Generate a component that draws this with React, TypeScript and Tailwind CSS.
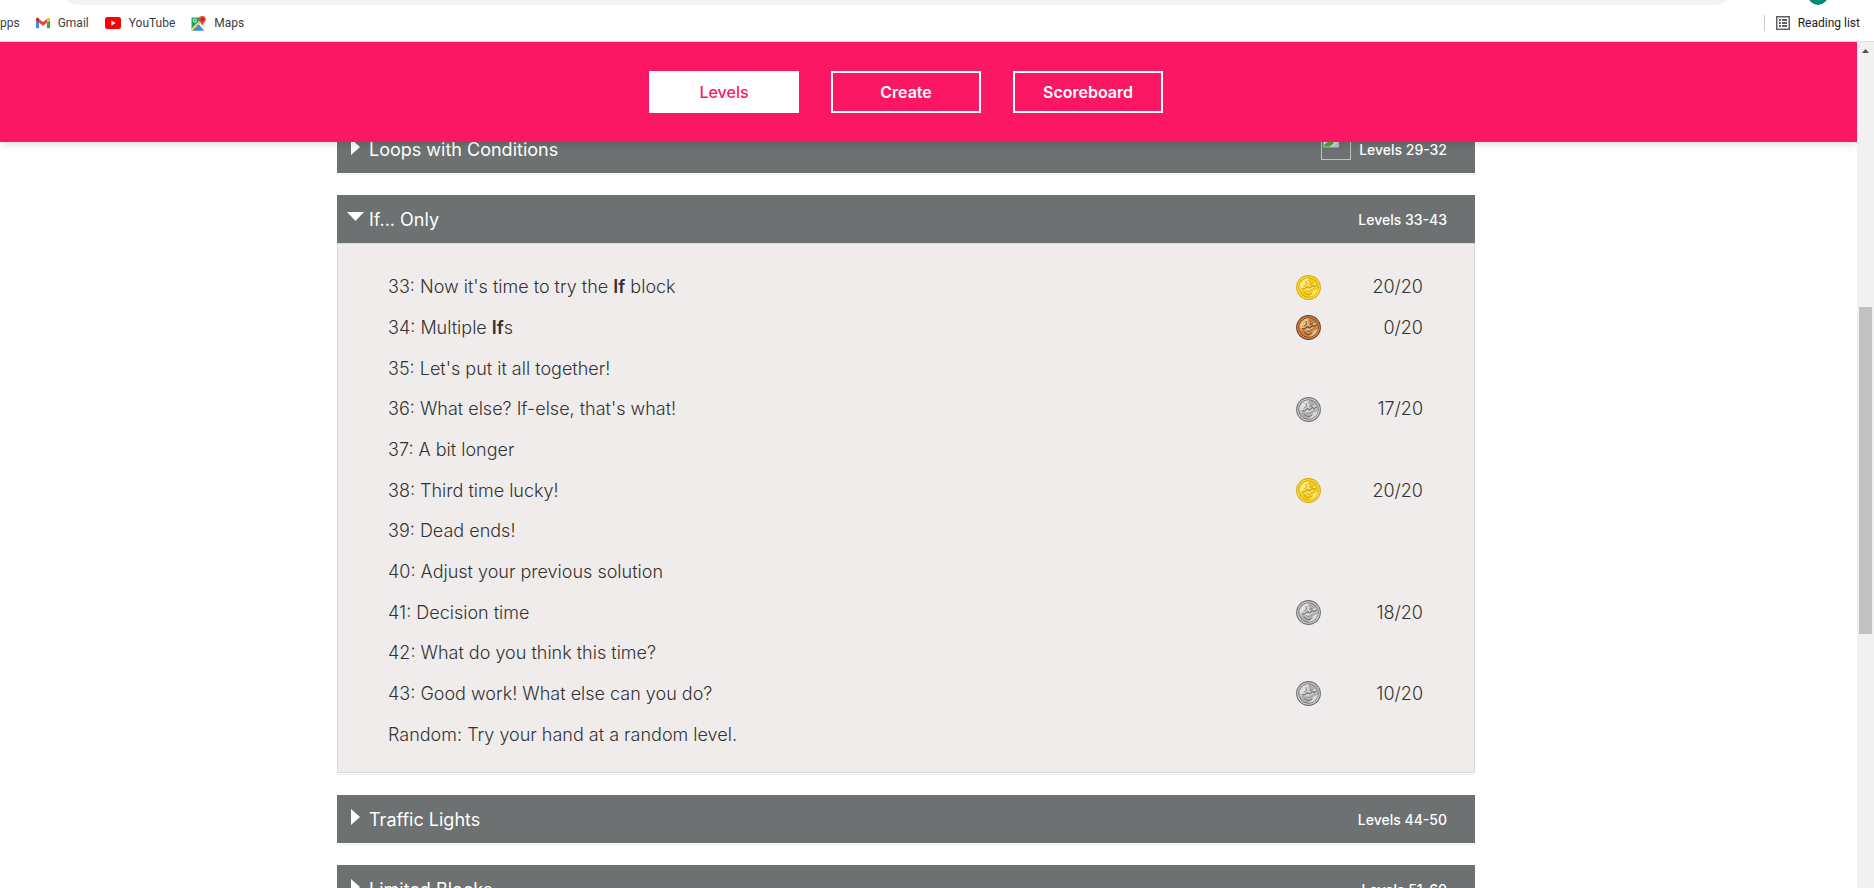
import type { ReactNode } from "react";

type Medal = "gold" | "silver" | "bronze";

const metals: Record<Medal, { rim: string; ring: string; face: string; light: string; mark: string }> = {
  gold: { rim: "#dba800", ring: "#ffe64a", face: "#f2ca14", light: "#fff6a8", mark: "#cf9f0c" },
  silver: { rim: "#6f6f72", ring: "#d2d2d4", face: "#adadb0", light: "#f2f2f3", mark: "#737377" },
  bronze: { rim: "#7a3a1a", ring: "#cf9054", face: "#c08244", light: "#fbd9a6", mark: "#7b4017" },
};

function Coin({ medal }: { medal: Medal }) {
  const c = metals[medal];
  return (
    <svg viewBox="0 0 25 25" className="size-[25px]" role="img" aria-label={medal}>
      <circle cx="12.5" cy="12.5" r="12.4" fill={c.rim} />
      <circle cx="12.5" cy="12.5" r="11.3" fill={c.ring} />
      <circle cx="12.5" cy="12.5" r="10.2" fill={c.mark} />
      <circle cx="12.5" cy="12.5" r="9.5" fill={c.face} />
      <path d="M3.500 11C4.500 6 8.500 3.400 13 3.200L11 8L5 16Z" fill={c.light} opacity=".7" />
      <path d="M13 21.800C18 21.500 21.500 18 21.800 13.500L17 16Z" fill={c.light} opacity=".65" />
      <path d="M10.500 4.500L13.500 7.500L13 10.500L16 10L18 8L22 9L21 12L17.500 12.500L15.500 16L12 18L9 16L7 12.500L9 10.500Z" fill={c.light} opacity=".55" />
      <path d="M5.500 13.500L8.500 14L11.500 11.500L13.500 13L16.500 10.500L18 11.500L21.500 9.500" fill="none" stroke={c.mark} strokeWidth="1.1" />
      <path d="M7.500 11.500L10.500 9.500L10 6M10 15.500Q13 18 16.500 14M14 9.500L16.500 8.500M8 17Q12 21.500 16.500 18" fill="none" stroke={c.mark} strokeWidth=".9" />
    </svg>
  );
}

function Triangle({ open }: { open: boolean }) {
  return open ? (
    <svg viewBox="0 0 17 16" className="h-4 w-[17px]" fill="#fff" aria-hidden="true"><path d="M0 3H17L8.500 12Z" /></svg>
  ) : (
    <svg viewBox="0 0 17 16" className="h-4 w-[17px]" fill="#fff" aria-hidden="true"><path d="M4 0V16L13 8Z" /></svg>
  );
}

function BrokenImage() {
  return (
    <svg viewBox="0 0 30 30" className="size-[30px]" role="img" aria-label="Medal unavailable">
      <rect x=".5" y=".5" width="29" height="29" fill="none" stroke="#c0c0c0" />
      <path d="M2.500 2.500H13L17.500 7V17H2.500Z" fill="#c6d9f7" stroke="#b5b5b5" />
      <path d="M3 16.500V15L9 10L13 13L9 16.500Z" fill="#4ba836" />
      <path d="M11 17L18 11V17Z" fill="#b8c4c0" />
    </svg>
  );
}

function Section({ title, range, open = false, extra, children }: { title: string; range: string; open?: boolean; extra?: ReactNode; children?: ReactNode }) {
  return (
    <section className="shrink-0 shadow-[0_1px_0_#fff,0_2px_0_#f0f0f0]">
      <button type="button" aria-expanded={open} className="flex h-12 w-full items-center bg-[#6d7171] pr-7 pl-[10px] text-left text-white">
        <span className="pb-1"><Triangle open={open} /></span>
        <span className="ml-[5px] flex-1 pt-[2px] text-lg">{title}</span>
        {extra && <span className="pb-[9px]">{extra}</span>}
        <span className="ml-2 pt-px text-sm font-medium">{range}</span>
      </button>
      {children}
    </section>
  );
}

const levels: { id: string; text: ReactNode; medal?: Medal; score?: string }[] = [
  { id: "33", text: <>Now it's time to try the <b className="font-semibold">If</b> block</>, medal: "gold", score: "20/20" },
  { id: "34", text: <>Multiple <b className="font-semibold">If</b>s</>, medal: "bronze", score: "0/20" },
  { id: "35", text: "Let's put it all together!" },
  { id: "36", text: "What else? If-else, that's what!", medal: "silver", score: "17/20" },
  { id: "37", text: "A bit longer" },
  { id: "38", text: "Third time lucky!", medal: "gold", score: "20/20" },
  { id: "39", text: "Dead ends!" },
  { id: "40", text: "Adjust your previous solution" },
  { id: "41", text: "Decision time", medal: "silver", score: "18/20" },
  { id: "42", text: "What do you think this time?" },
  { id: "43", text: "Good work! What else can you do?", medal: "silver", score: "10/20" },
  { id: "Random", text: "Try your hand at a random level." },
];

function GmailIcon() {
  return (
    <svg viewBox="0 0 16 12" className="h-3 w-[14px]" aria-hidden="true">
      <path d="M1 12H3.500V5.500L0 3V11Q0 12 1 12Z" fill="#4285f4" />
      <path d="M12.500 12H15Q16 12 16 11V3L12.500 5.500Z" fill="#34a853" />
      <path d="M12.500 1.500V5.700L16 3V1.700C16 .1 14.200-.5 13.200.4Z" fill="#fbbc04" />
      <path d="M3.500 5.700V1.500L8 4.800L12.500 1.500V5.700L8 9Z" fill="#ea4335" />
      <path d="M0 1.700V3L3.500 5.700V1.500L2.800.4C1.800-.5 0 .1 0 1.700Z" fill="#c5221f" />
    </svg>
  );
}

function YouTubeIcon() {
  return (
    <svg viewBox="0 0 16 12" className="h-3 w-4" aria-hidden="true">
      <rect width="16" height="12" rx="2.500" fill="#f00" />
      <path d="M6.400 3.500V8.500L10.700 6Z" fill="#fff" />
    </svg>
  );
}

function MapsIcon() {
  return (
    <svg viewBox="0 0 15 15" className="size-[15px]" aria-hidden="true">
      <path d="M1.500 1.500H13V14.500H1.500Q.5 14.500.5 13.500V2.500Q.5 1.500 1.500 1.500Z" fill="#1fa463" />
      <path d="M7.200 8L13.500 14.500H1.500Z" fill="#4285f4" />
      <path d="M12.500 2.500L13.500 3V13.500L8 8Z" fill="#dcdcdc" />
      <path d="M.5 12.500L11 2L12.500 3.500L1.500 14.500L.5 13.500Z" fill="#ffd54b" />
      <path d="M8 8.500L9 7.500L14 13L13 14.500Z" fill="#fff" />
      <circle cx="3.800" cy="4.600" r="1.500" fill="none" stroke="#fff" strokeWidth=".9" />
      <path d="M11.400 0A3.400 3.400 0 0 0 8 3.400C8 5.800 10.700 6.400 11.400 9.500C12.100 6.400 14.800 5.800 14.800 3.400A3.400 3.400 0 0 0 11.400 0Z" fill="#ea4335" />
      <circle cx="11.400" cy="3.400" r="1.200" fill="#8c1d18" />
    </svg>
  );
}

export default function App() {
  return (
    <div className="flex h-screen flex-col overflow-hidden bg-white font-['Inter',sans-serif] text-[#333]">
      <div className="flex h-[42px] shrink-0 flex-col border-b border-[#dadce0] font-['Roboto',sans-serif] text-xs text-[#3c4043]">
        <div className="flex h-[5px] shrink-0 items-end overflow-hidden pr-[43px] pl-16">
          <div className="h-7 flex-1 rounded-full bg-[#f1f3f4]" />
          <div className="mr-[3px] ml-[78px] size-5 rounded-full bg-[#00897b]" />
        </div>
        <nav aria-label="Bookmarks" className="flex flex-1 items-center pr-[14px]">
          <a href="#apps">pps</a>
          <a href="#gmail" className="ml-4 flex items-center gap-2"><GmailIcon />Gmail</a>
          <a href="#youtube" className="ml-4 flex items-center gap-2"><YouTubeIcon />YouTube</a>
          <a href="#maps" className="ml-4 flex items-center gap-2"><MapsIcon />Maps</a>
          <button type="button" className="ml-auto flex h-4 items-center border-l border-[#c8cbcf] pl-[11px] text-[#202124]">
            <svg viewBox="0 0 14 14" className="mr-2 size-[14px]" fill="#5f6368" aria-hidden="true">
              <path fillRule="evenodd" d="M0 0H14V14H0ZM1.500 1.500V12.500H12.500V1.500Z" />
              <path d="M3 3H5V5H3ZM6 3H11V5H6ZM3 6H5V8H3ZM6 6H11V8H6ZM3 9H5V11H3ZM6 9H11V11H6Z" />
            </svg>
            Reading list
          </button>
        </nav>
      </div>
      <div className="flex min-h-0 flex-1">
        <div className="flex min-w-0 flex-1 flex-col overflow-hidden">
          <header className="z-10 flex h-[100px] shrink-0 items-center justify-center bg-[#fc1764] pr-[45px] shadow-[0_2px_8px_rgba(0,0,0,0.15)]">
            <nav aria-label="Main" className="flex gap-8 text-base font-semibold text-white">
              <a href="#levels" aria-current="page" className="flex h-[42px] w-[150px] items-center justify-center bg-white font-medium text-[#fc1764]">Levels</a>
              <a href="#create" className="flex h-[42px] w-[150px] items-center justify-center border-2 border-white">Create</a>
              <a href="#scoreboard" className="flex h-[42px] w-[150px] items-center justify-center border-2 border-white">Scoreboard</a>
            </nav>
          </header>
          <main className="-mt-[17px] min-h-0 flex-1 pr-[45px]">
            <div className="mx-auto flex max-w-[1138px] flex-col gap-[22px]">
              <Section title="Loops with Conditions" range="Levels 29-32" extra={<BrokenImage />} />
              <Section title="If... Only" range="Levels 33-43" open>
                <ul className="grid h-[530px] auto-rows-fr border border-[#d9d9d9] bg-[#f0eceb] pt-[23px] pr-[51px] pb-[17px] pl-[50px] text-lg font-light [font-optical-sizing:none]">
                  {levels.map((level) => (
                    <li key={level.id} className="flex items-center">
                      <a href={`#level-${level.id}`} className="flex-1">{level.id}: {level.text}</a>
                      {level.medal && <Coin medal={level.medal} />}
                      <span className="w-[102px] text-right">{level.score}</span>
                    </li>
                  ))}
                </ul>
              </Section>
              <Section title="Traffic Lights" range="Levels 44-50" />
              <Section title="Limited Blocks" range="Levels 51-60" />
            </div>
          </main>
        </div>
        <div aria-hidden="true" className="flex w-[17px] shrink-0 flex-col items-center bg-[#f1f1f1]">
          <svg viewBox="0 0 17 17" className="size-[17px]" fill="#505050"><path d="M5 11H12L8.500 7Z" /></svg>
          <div className="mt-[248px] h-[327px] w-[13px] bg-[#c1c1c1]" />
        </div>
      </div>
    </div>
  );
}
